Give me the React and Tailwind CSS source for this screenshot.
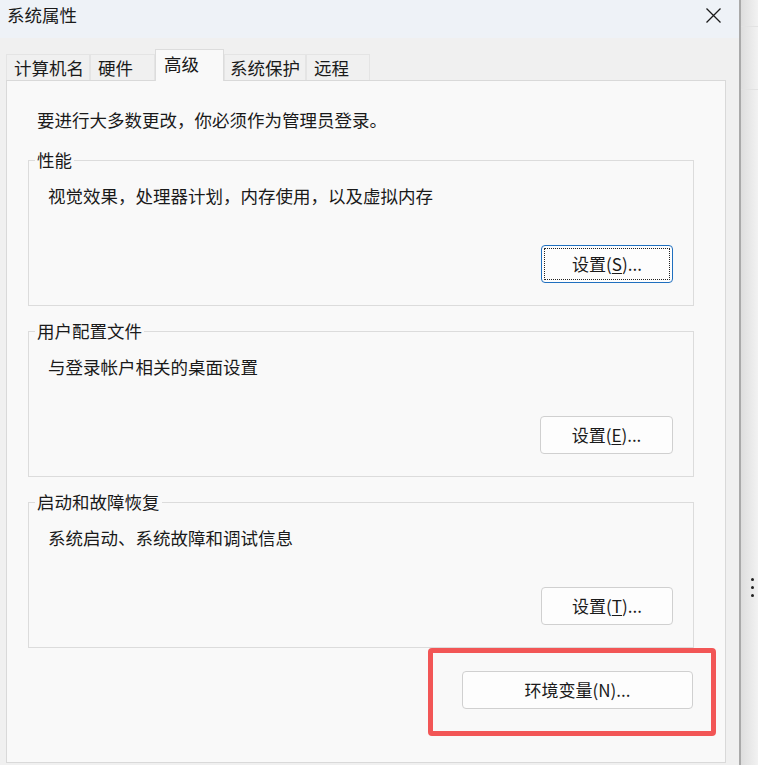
import React from "react";

function Btn({ children, focused, className = "" }) {
  return (
    <div
      className={
        "h-[38px] flex items-center justify-center rounded-[4px] bg-[#fdfdfd] text-[17px] leading-[24px] " +
        (focused
          ? "border border-[#1f6fbf] outline-1 outline-dotted outline-[#222] outline-offset-[-4px] "
          : "border border-[#d0d0d0] ") +
        className
      }
    >
      {children}
    </div>
  );
}

function Group({ title, desc, children, mt }) {
  return (
    <fieldset className={"ml-[21px] w-[666px] border border-[#dcdcdc] p-0 " + mt}>
      <legend className="ml-[6px] px-[2px] leading-[24px] text-[17.5px]">{title}</legend>
      <div className="flex flex-col pl-[19px] pr-[20px] pt-[12px] pb-[22px]">
        <div className="leading-[24px] text-[17.5px]">{desc}</div>
        <div className="mt-[37px] flex justify-end">{children}</div>
      </div>
    </fieldset>
  );
}

export default function App() {
  const tabs = [
    { t: "计算机名", w: "w-[84px]", pl: "pl-[7px]" },
    { t: "硬件", w: "w-[65px]", pl: "pl-[7px]" },
    { t: "高级", w: "w-[69px]", pl: "pl-[8px]", sel: true },
    { t: "系统保护", w: "w-[82px]", pl: "pl-[5px]" },
    { t: "远程", w: "w-[64px]", pl: "pl-[7px]" },
  ];
  return (
    <div className="w-[758px] h-[765px] flex overflow-hidden bg-[#f0f0f0] text-[#1a1a1a] font-['Noto_Sans_CJK_SC','Microsoft_YaHei',sans-serif]">
      <div className="w-[741px] h-[765px] flex flex-col border-r-2 border-[#a9a9a9] bg-[#f0f0f0]">
        <div className="h-[38px] shrink-0 flex items-center justify-between pl-[7px] pr-[18px] bg-[#eef2f7]">
          <span className="text-[17.5px] leading-[24px] -mt-[8px]">系统属性</span>
          <svg width="15" height="15" viewBox="0 0 15 15" className="-mt-[7px]">
            <path d="M0.5 0.5 L14.5 14.5 M14.5 0.5 L0.5 14.5" stroke="#1a1a1a" strokeWidth="1.3" fill="none" />
          </svg>
        </div>
        <div className="h-[42px] shrink-0 flex items-end pl-[6px]">
          {tabs.map((tb) =>
            tb.sel ? (
              <div
                key={tb.t}
                className={
                  "relative z-10 h-[32px] -mb-px flex items-start pt-[2px] border border-b-0 border-[#dcdcdc] bg-[#f9f9f9] text-[17.5px] leading-[24px] " +
                  tb.w + " " + tb.pl
                }
              >
                {tb.t}
              </div>
            ) : (
              <div
                key={tb.t}
                className={
                  "h-[26px] flex items-center border border-b-0 border-[#e4e4e4] bg-[#f0f0f0] text-[17.5px] leading-[24px] " +
                  tb.w + " " + tb.pl
                }
              >
                {tb.t}
              </div>
            )
          )}
        </div>
        <div className="relative ml-[6px] w-[720px] h-[683px] shrink-0 border border-[#d9d9d9] bg-[#f9f9f9] flex flex-col">
          <div className="pt-[27px] pl-[30px] leading-[24px] text-[17.5px]">要进行大多数更改，你必须作为管理员登录。</div>
          <Group title="性能" desc="视觉效果，处理器计划，内存使用，以及虚拟内存" mt="mt-[16px]">
            <Btn focused className="w-[132px]">
              设置(<span className="underline underline-offset-2">S</span>)...
            </Btn>
          </Group>
          <Group title="用户配置文件" desc="与登录帐户相关的桌面设置" mt="mt-[13px]">
            <Btn className="w-[133px]">
              设置(<span className="underline underline-offset-2">E</span>)...
            </Btn>
          </Group>
          <Group title="启动和故障恢复" desc="系统启动、系统故障和调试信息" mt="mt-[13px]">
            <Btn className="w-[132px]">
              设置(<span className="underline underline-offset-2">T</span>)...
            </Btn>
          </Group>
          <div className="mt-[23px] flex justify-end pr-[32px]">
            <Btn className="w-[231px]">环境变量(N)...</Btn>
          </div>
          <div className="absolute left-[421px] top-[567px] w-[288px] h-[88px] border-[5px] border-[#f25656] rounded-[4px]" />
        </div>
      </div>
      <div className="flex-1 h-full flex flex-col bg-linear-to-r from-[#dedede] to-[#f2f2f2]">
        <div className="h-[27px] border-b border-[#e2e2e2]" />
        <div className="h-[63px] border-b border-[#e2e2e2]" />
        <div className="mt-[488px] pl-[10px] flex flex-col gap-[5px]">
          <div className="w-[3px] h-[3px] rounded-full bg-[#222]" />
          <div className="w-[3px] h-[3px] rounded-full bg-[#222]" />
          <div className="w-[3px] h-[3px] rounded-full bg-[#222]" />
        </div>
      </div>
    </div>
  );
}
